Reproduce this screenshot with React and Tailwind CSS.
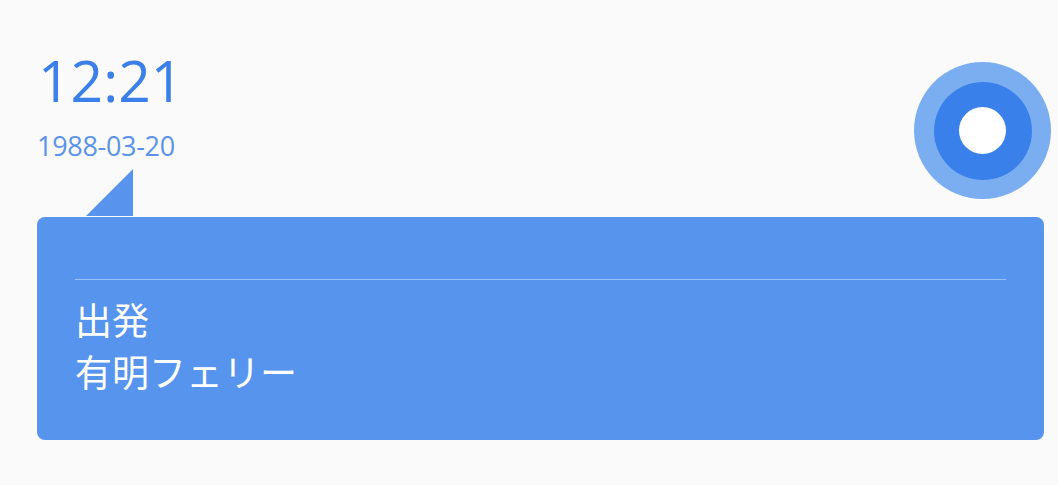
import React from 'react';

const App = () => {
  return (
    <div className="w-[1058px] h-[485px] bg-[#fafafa] overflow-hidden" style={{ fontFamily: '"Open Sans", "Noto Sans CJK JP", sans-serif' }}>
      <div className="flex justify-between pl-[37px] pr-[7px]">
        <div className="flex flex-col pt-[40px]">
          <div className="text-[57px] leading-[80px] text-[#3b7fe8] ml-[1px]">12:21</div>
          <div className="text-[27px] leading-[36px] text-[#5a93e8] mt-[8px] -tracking-[0.3px]">1988-03-20</div>
          <div className="ml-[49px] mt-[5px] w-[47px] h-[47px] bg-[#5894ee] [clip-path:polygon(100%_0,100%_100%,0_100%)]" />
        </div>
        <div className="mt-[62px] w-[137px] h-[137px] rounded-full bg-[#7aaef0] flex items-center justify-center">
          <div className="w-[98px] h-[98px] rounded-full bg-[#3a80ea] flex items-center justify-center">
            <div className="w-[47px] h-[47px] rounded-full bg-white" />
          </div>
        </div>
      </div>
      <div className="mx-[37px] mt-[1px] w-[1007px] h-[223px] rounded-[8px] bg-[#5794ee] px-[38px] pt-[62px]">
        <div className="h-[1px] bg-white/40" />
        <div className="mt-[15px] text-white text-[37px] leading-[52px]">
          <div>出発</div>
          <div>有明フェリー</div>
        </div>
      </div>
    </div>
  );
};

export default App;
